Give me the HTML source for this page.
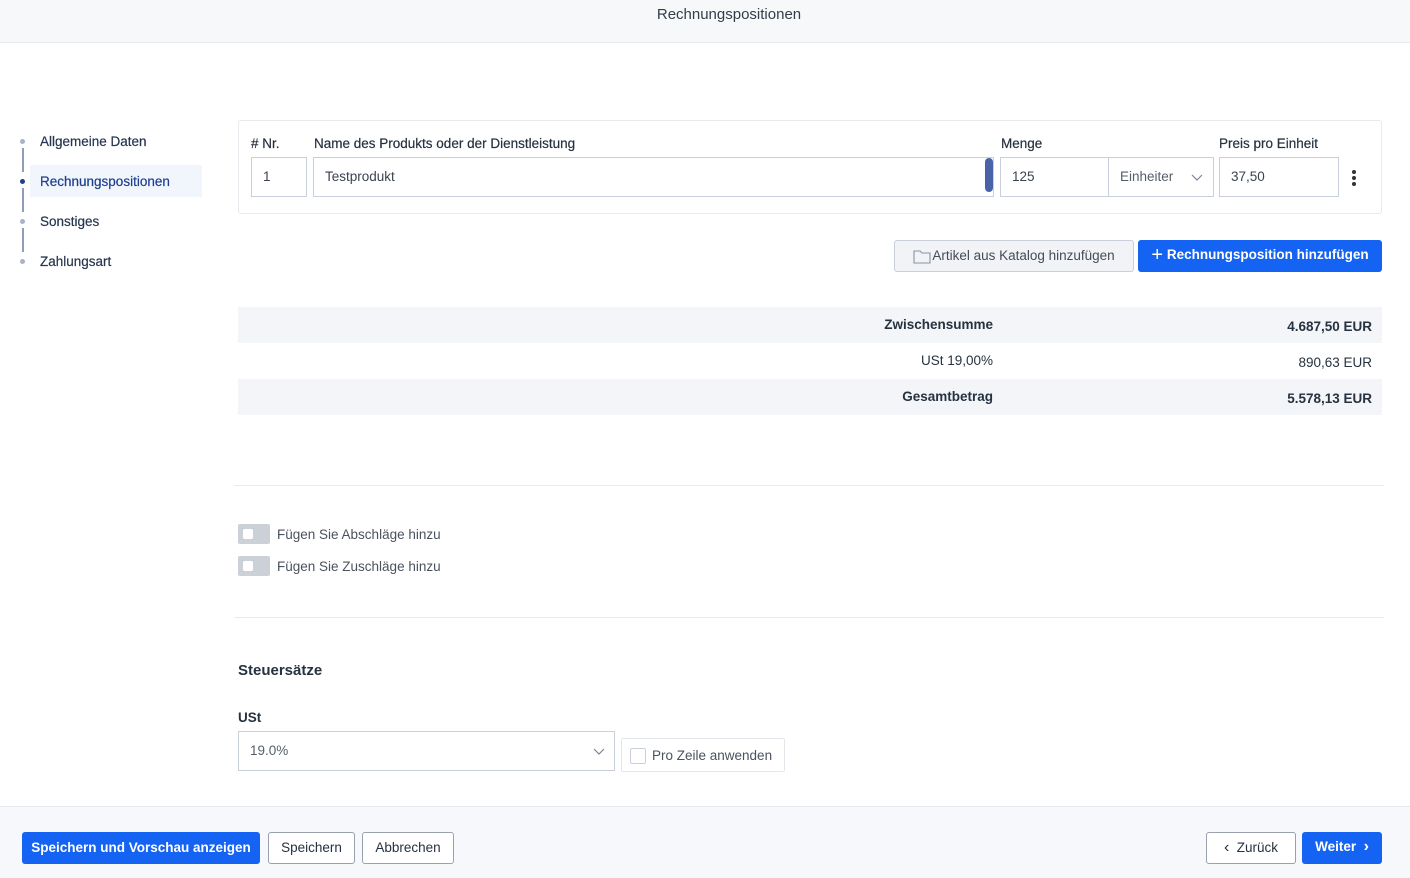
<!DOCTYPE html>
<html><head><meta charset="utf-8"><style>
*{box-sizing:border-box;margin:0;padding:0}
body{width:1410px;height:878px;overflow:hidden;background:#fff;font-family:"Liberation Sans",sans-serif;color:#26323f;font-size:13.5px;position:relative}
.abs{position:absolute}
.hdr{left:0;top:0;width:1410px;height:43px;background:#f7f8fa;border-bottom:1px solid #e6e9ee;text-align:center;line-height:29px;font-size:15px;color:#333d4a;padding-left:48px}
.nav{left:40px;font-size:13.5px;color:#26364f;-webkit-text-stroke:0.2px #26364f}
.dot{width:5px;height:5px;border-radius:50%;background:#a8b3c7;left:20px}
.vl{left:22px;width:1.5px;background:#8f9dbb}
.inp{border:1px solid #c9d0db;background:#fff;height:40px;line-height:38px;padding-left:11px;color:#3b4350}
.lbl{font-size:13.5px;color:#26323f;-webkit-text-stroke:0.2px #26323f}
.btn{border-radius:3px;height:32px;line-height:30px;font-size:13.5px;text-align:center}
.row{left:238px;width:1144px;height:36px;line-height:36px}
.sep{height:1px;background:#e6e9ee;left:234px;width:1150px}
.tog{left:238px;width:32px;height:20px;background:#ccd1d8;border-radius:2px}
.tog i{position:absolute;left:5px;top:5px;width:10px;height:10px;background:#fff;border-radius:2px}
</style></head><body>
<div class="abs hdr">Rechnungspositionen</div>

<div class="abs dot" style="top:139px"></div>
<div class="abs vl" style="top:148px;height:24px"></div>
<div class="abs dot" style="top:179px;background:#1f3f8f"></div>
<div class="abs vl" style="top:188px;height:24px"></div>
<div class="abs dot" style="top:219px"></div>
<div class="abs vl" style="top:228px;height:24px"></div>
<div class="abs dot" style="top:259px"></div>
<div class="abs nav" style="top:134px">Allgemeine Daten</div>
<div class="abs" style="left:30px;top:165px;width:172px;height:32px;background:#f1f5fc"></div>
<div class="abs nav" style="top:174px;color:#1f3f8f;-webkit-text-stroke:0.2px #1f3f8f">Rechnungspositionen</div>
<div class="abs nav" style="top:214px">Sonstiges</div>
<div class="abs nav" style="top:254px">Zahlungsart</div>

<div class="abs" style="left:238px;top:120px;width:1144px;height:94px;border:1px solid #e6e9ee;border-radius:3px"></div>
<div class="abs lbl" style="left:251px;top:136px"># Nr.</div>
<div class="abs lbl" style="left:314px;top:136px">Name des Produkts oder der Dienstleistung</div>
<div class="abs lbl" style="left:1001px;top:136px">Menge</div>
<div class="abs lbl" style="left:1219px;top:136px">Preis pro Einheit</div>
<div class="abs inp" style="left:251px;top:157px;width:56px">1</div>
<div class="abs inp" style="left:313px;top:157px;width:681px">Testprodukt</div>
<div class="abs" style="left:985px;top:158px;width:8px;height:34px;background:#4a63a8;border-radius:4px"></div>
<div class="abs inp" style="left:1000px;top:157px;width:109px">125</div>
<div class="abs inp" style="left:1108px;top:157px;width:106px;color:#555e6b">Einheiter
<svg class="abs" style="left:82px;top:16px" width="12" height="8" viewBox="0 0 12 8"><path d="M1 1l5 5 5-5" fill="none" stroke="#7c8595" stroke-width="1.2"/></svg></div>
<div class="abs inp" style="left:1219px;top:157px;width:120px">37,50</div>
<div class="abs" style="left:1352px;top:170px;width:4px;height:4px;border-radius:50%;background:#333;box-shadow:0 6px 0 #333,0 12px 0 #333"></div>

<div class="abs btn" style="left:894px;top:240px;width:240px;border:1px solid #c9d0db;background:#f1f3f6;color:#444c58">
<svg style="vertical-align:-4px;margin-right:1px" width="18" height="16" viewBox="0 0 18 16"><path d="M1 3h6l2 2h8v10H1z" fill="none" stroke="#8a93a3" stroke-width="1.1"/></svg>Artikel aus Katalog hinzufügen</div>
<div class="abs btn" style="left:1138px;top:240px;width:244px;background:#1463f3;color:#fff;font-weight:bold"><span style="font-size:20px;font-weight:normal;vertical-align:-2px">+</span> Rechnungsposition hinzufügen</div>

<div class="abs row" style="top:307px;background:#f3f5f8"></div>
<div class="abs row" style="top:379px;background:#f3f5f8"></div>
<div class="abs" style="right:417px;top:317px;font-weight:bold">Zwischensumme</div>
<div class="abs" style="right:38px;top:319px;font-weight:bold">4.687,50 EUR</div>
<div class="abs" style="right:417px;top:353px">USt 19,00%</div>
<div class="abs" style="right:38px;top:355px">890,63 EUR</div>
<div class="abs" style="right:417px;top:389px;font-weight:bold">Gesamtbetrag</div>
<div class="abs" style="right:38px;top:391px;font-weight:bold">5.578,13 EUR</div>

<div class="abs sep" style="top:485px"></div>
<div class="abs tog" style="top:524px"><i></i></div>
<div class="abs" style="left:277px;top:527px;color:#4a5260">Fügen Sie Abschläge hinzu</div>
<div class="abs tog" style="top:556px"><i></i></div>
<div class="abs" style="left:277px;top:559px;color:#4a5260">Fügen Sie Zuschläge hinzu</div>
<div class="abs sep" style="top:617px"></div>

<div class="abs" style="left:238px;top:662px;font-size:15px;font-weight:bold">Steuersätze</div>
<div class="abs" style="left:238px;top:710px;font-weight:bold">USt</div>
<div class="abs inp" style="left:238px;top:731px;width:377px;height:40px;color:#555e6b">19.0%
<svg class="abs" style="left:354px;top:16px" width="12" height="8" viewBox="0 0 12 8"><path d="M1 1l5 5 5-5" fill="none" stroke="#7c8595" stroke-width="1.2"/></svg></div>
<div class="abs" style="left:621px;top:738px;width:164px;height:34px;border:1px solid #e3e7ec;border-radius:2px"></div>
<div class="abs" style="left:630px;top:748px;width:16px;height:16px;border:1px solid #c9d0db;border-radius:2px"></div>
<div class="abs" style="left:652px;top:748px;color:#4a5260">Pro Zeile anwenden</div>

<div class="abs" style="left:0;top:806px;width:1410px;height:72px;background:#f6f8fb;border-top:1px solid #e6e9ee"></div>
<div class="abs btn" style="left:22px;top:832px;width:238px;background:#1463f3;color:#fff;font-weight:bold;line-height:31px">Speichern und Vorschau anzeigen</div>
<div class="abs btn" style="left:268px;top:832px;width:87px;border:1px solid #98a1ad;background:#fff">Speichern</div>
<div class="abs btn" style="left:362px;top:832px;width:92px;border:1px solid #98a1ad;background:#fff">Abbrechen</div>
<div class="abs btn" style="left:1206px;top:832px;width:90px;border:1px solid #98a1ad;background:#fff"><span style="font-size:16px">‹</span>&nbsp; Zurück</div>
<div class="abs btn" style="left:1302px;top:832px;width:80px;background:#1463f3;color:#fff;font-weight:bold">Weiter &nbsp;<span style="font-size:16px">›</span></div>
</body></html>
